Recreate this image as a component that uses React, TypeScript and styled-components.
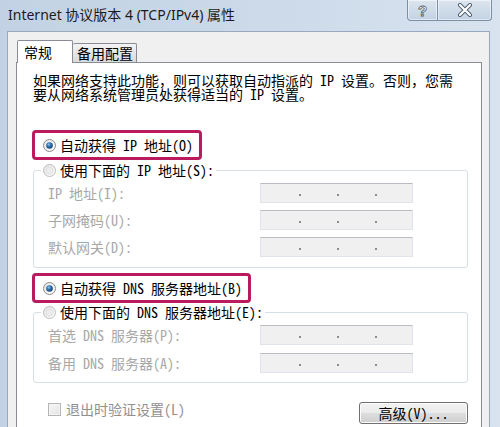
import React from 'react';
import styled, { createGlobalStyle } from 'styled-components';

const UI_FONT = `"Noto Sans Mono CJK SC", "Noto Sans CJK SC", "Liberation Mono", monospace`;

const GlobalStyle = createGlobalStyle`
  html, body {
    margin: 0;
    padding: 0;
  }
  body {
    width: 500px;
    height: 427px;
    overflow: hidden;
    background: #c9d8e8;
    font-family: ${UI_FONT};
  }
`;

const Window = styled.div`
  width: 500px;
  height: 427px;
  display: flex;
  flex-direction: column;
  overflow: hidden;
  background: linear-gradient(90deg, #c2d2e4 0%, #cad8e8 45%, #d8e3ef 100%);
`;

const TitleBar = styled.div`
  height: 31px;
  flex: none;
  display: flex;
  justify-content: space-between;
  align-items: flex-start;
  padding: 0 8px;
`;

const Title = styled.div`
  margin-top: 6px;
  font-family: 'Noto Sans', 'Noto Sans CJK SC', sans-serif;
  font-size: 14px;
  line-height: 18px;
  color: #1b1b1b;
`;

const Controls = styled.div`
  display: flex;
`;

const CaptionBtn = styled.div<{ $w: number; $right?: boolean }>`
  width: ${(p) => p.$w}px;
  height: 21px;
  box-sizing: border-box;
  display: flex;
  align-items: center;
  justify-content: center;
  border: 1px solid #7d8fa5;
  border-top: none;
  ${(p) => (p.$right ? 'border-left: none;' : '')}
  border-radius: ${(p) => (p.$right ? '0 0 4px 0' : '0 0 0 4px')};
  background: linear-gradient(180deg, #dde6f0 0%, #cfdbe8 50%, #c3d2e3 100%);
  box-shadow: inset 0 0 0 1px rgba(255, 255, 255, 0.5);
`;

const HelpGlyph = styled.span`
  font-family: 'Liberation Sans', sans-serif;
  font-weight: 700;
  font-size: 15px;
  line-height: 1;
  color: #fff;
  -webkit-text-stroke: 0.8px #4d5c6e;
`;

const Body = styled.div`
  flex: 1;
  margin: 0 10px 0 7px;
  background: #f0f0f0;
  border: 1px solid #98a9bd;
  border-bottom: none;
  padding: 8px 7px 0 8px;
  display: flex;
  flex-direction: column;
`;

const TabStrip = styled.div`
  height: 22px;
  display: flex;
  align-items: flex-end;
  padding-left: 1px;
`;

const Tab = styled.div<{ $active?: boolean }>`
  box-sizing: border-box;
  position: relative;
  font-size: 14px;
  line-height: 1;
  color: #000;
  white-space: nowrap;
  border: 1px solid #898c95;
  border-bottom: none;
  border-radius: 2px 2px 0 0;
  display: flex;
  align-items: center;
  height: ${(p) => (p.$active ? 23 : 19)}px;
  width: ${(p) => (p.$active ? 56 : 64)}px;
  margin-bottom: ${(p) => (p.$active ? -1 : 0)}px;
  z-index: ${(p) => (p.$active ? 1 : 0)};
  background: ${(p) =>
    p.$active ? '#fff' : 'linear-gradient(180deg, #f3f3f3 0%, #e6e6e6 50%, #dadada 100%)'};
  ${(p) => (!p.$active ? 'border-left: none; padding: 0 2px 0 4px;' : 'padding: 0 0 0 6px;')}
`;

const Panel = styled.div`
  flex: 1;
  background: #fff;
  border: 1px solid #898c95;
  border-bottom: none;
  padding: 10px 13px 0 16px;
  display: flex;
  flex-direction: column;
  font-size: 14px;
  color: #000;
`;

const Intro = styled.p`
  margin: 0;
  font-size: 14px;
  line-height: 14px;
  white-space: nowrap;
`;

const HighlightRow = styled.div<{ $mt: number }>`
  align-self: flex-start;
  box-sizing: border-box;
  height: 30px;
  margin: ${(p) => p.$mt}px 0 0 -1px;
  padding: 0 6px 0 8px;
  border: 3px solid #bb1a5c;
  border-radius: 4px;
  display: flex;
  align-items: center;
  gap: 4px;
  line-height: 1;
  white-space: nowrap;
`;

const Group = styled.fieldset<{ $mt: number; $pb: number }>`
  margin: ${(p) => p.$mt}px 0 0 0;
  padding: 4px 0 ${(p) => p.$pb}px 14px;
  border: 1px solid #d5dfe5;
  border-radius: 3px;
  min-width: 0;
`;

const Legend = styled.legend`
  margin-left: -7px;
  padding: 0 2px;
  height: 18px;
  display: flex;
  align-items: center;
  gap: 4px;
  line-height: 1;
  white-space: nowrap;
`;

const FieldGrid = styled.div<{ $gap: number }>`
  display: grid;
  grid-template-columns: 212px 153px;
  grid-auto-rows: 20px;
  row-gap: ${(p) => p.$gap}px;
`;

const FieldLabel = styled.div`
  display: flex;
  align-items: center;
  color: #a8a8a8;
  white-space: nowrap;
  line-height: 1;
`;

const IpBox = styled.div`
  box-sizing: border-box;
  height: 20px;
  background: #f0f0f0;
  border: 1px solid #dfe4ea;
  border-top-color: #b9bcc2;
  display: flex;
  justify-content: center;
  align-items: flex-end;
  gap: 36px;
  padding: 0 0 6px 2px;
`;

const Dot = styled.span`
  width: 2px;
  height: 2px;
  border-radius: 1px;
  background: #6d6d6d;
`;

const Footer = styled.div`
  margin-top: 19px;
  display: flex;
  justify-content: space-between;
  align-items: flex-start;
  padding-left: 15px;
`;

const CheckRow = styled.div`
  display: flex;
  align-items: center;
  gap: 5px;
  height: 14px;
  color: #8f8f8f;
  line-height: 1;
  white-space: nowrap;
`;

const CheckBox = styled.span`
  box-sizing: border-box;
  width: 13px;
  height: 13px;
  border: 1px solid #b5b5b5;
  background: linear-gradient(135deg, #f7f7f7 0%, #e3e3e3 100%);
  box-shadow: inset 0 0 0 1px #f4f4f4;
`;

const PushButton = styled.button`
  box-sizing: border-box;
  width: 109px;
  height: 22px;
  margin: 0;
  padding: 0;
  font-family: ${UI_FONT};
  font-size: 14px;
  line-height: 1;
  color: #000;
  border: 1px solid #707070;
  border-radius: 3px;
  background: linear-gradient(180deg, #f2f2f2 0%, #ebebeb 48%, #dddddd 52%, #cfcfcf 100%);
  box-shadow: inset 0 0 0 1px #fcfcfc;
`;

function Radio({ checked }: { checked?: boolean }) {
  return (
    <svg width="13" height="13" viewBox="0 0 13 13" style={{ flex: 'none' }}>
      <defs>
        <linearGradient id="rb" x1="0" y1="0" x2="1" y2="1">
          <stop offset="0" stopColor="#e4e4e4" />
          <stop offset="1" stopColor="#ffffff" />
        </linearGradient>
        <radialGradient id="rd" cx="0.4" cy="0.35" r="0.7">
          <stop offset="0" stopColor="#8fc6f0" />
          <stop offset="0.45" stopColor="#2d6fae" />
          <stop offset="1" stopColor="#133f6e" />
        </radialGradient>
      </defs>
      <circle cx="6.5" cy="6.5" r="6" fill="url(#rb)" stroke={checked ? '#8a8a8a' : '#bcbcbc'} />
      {checked ? (
        <circle cx="6.5" cy="6.5" r="3.3" fill="url(#rd)" />
      ) : (
        <circle cx="6.5" cy="6.5" r="3.6" fill="#ececec" stroke="#dadada" strokeWidth="0.8" />
      )}
    </svg>
  );
}

function IpField() {
  return (
    <IpBox>
      <Dot />
      <Dot />
      <Dot />
    </IpBox>
  );
}

export default function App() {
  return (
    <Window>
      <GlobalStyle />
      <TitleBar>
        <Title>Internet 协议版本 4 (TCP/IPv4) 属性</Title>
        <Controls>
          <CaptionBtn $w={31}>
            <HelpGlyph>?</HelpGlyph>
          </CaptionBtn>
          <CaptionBtn $w={54} $right>
            <svg width="16" height="14" viewBox="0 0 16 14">
              <path d="M3 2 L13 12 M13 2 L3 12" stroke="#4d5c6e" strokeWidth="4" strokeLinecap="round" />
              <path d="M3 2 L13 12 M13 2 L3 12" stroke="#ffffff" strokeWidth="2.2" strokeLinecap="round" />
            </svg>
          </CaptionBtn>
        </Controls>
      </TitleBar>
      <Body>
        <TabStrip>
          <Tab $active>常规</Tab>
          <Tab>备用配置</Tab>
        </TabStrip>
        <Panel>
          <Intro>
            如果网络支持此功能，则可以获取自动指派的 IP 设置。否则，您需
            <br />
            要从网络系统管理员处获得适当的 IP 设置。
          </Intro>

          <HighlightRow $mt={29}>
            <Radio checked />
            自动获得 IP 地址(O)
          </HighlightRow>

          <Group $mt={1} $pb={10}>
            <Legend>
              <Radio />
              使用下面的 IP 地址(S):
            </Legend>
            <FieldGrid $gap={7}>
              <FieldLabel>IP 地址(I):</FieldLabel>
              <IpField />
              <FieldLabel>子网掩码(U):</FieldLabel>
              <IpField />
              <FieldLabel>默认网关(D):</FieldLabel>
              <IpField />
            </FieldGrid>
          </Group>

          <HighlightRow $mt={5}>
            <Radio checked />
            自动获得 DNS 服务器地址(B)
          </HighlightRow>

          <Group $mt={0} $pb={9}>
            <Legend>
              <Radio />
              使用下面的 DNS 服务器地址(E):
            </Legend>
            <FieldGrid $gap={8}>
              <FieldLabel>首选 DNS 服务器(P):</FieldLabel>
              <IpField />
              <FieldLabel>备用 DNS 服务器(A):</FieldLabel>
              <IpField />
            </FieldGrid>
          </Group>

          <Footer>
            <CheckRow>
              <CheckBox />
              退出时验证设置(L)
            </CheckRow>
            <PushButton type="button">高级(V)...</PushButton>
          </Footer>
        </Panel>
      </Body>
    </Window>
  );
}
